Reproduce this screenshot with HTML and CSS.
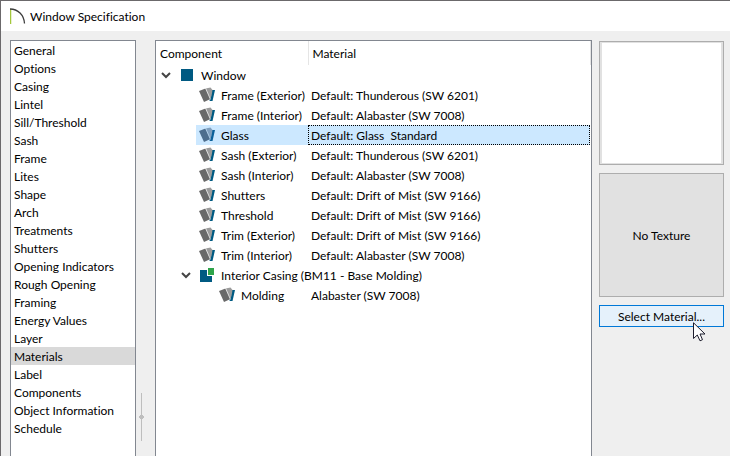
FILE: index.html
```
<!DOCTYPE html>
<html lang="en">
<head>
    <meta charset="UTF-8">
    <meta name="viewport" content="width=device-width, initial-scale=1.0">
    <title>Window Specification</title>
    <link rel="stylesheet" href="styles.css">
</head>
<body>
    <!-- shared icons -->
    <svg class="sprite" aria-hidden="true">
        <symbol id="chevron" viewBox="0 0 10 8">
            <path d="M1 2 L5 6 L9 2" fill="none" stroke="#444" stroke-width="2"/>
        </symbol>
        <symbol id="swatches" viewBox="0 0 16 16">
            <path d="M13 3 L16 3 L13.500 14 L10.500 14 Z" fill="#005a82"/>
            <path d="M6.500 1.500 L11.500 0.500 L13.500 3 L12.500 9 L11 12 Z" fill="#9b9b9b"/>
            <path d="M0 4 L6.500 1.500 L11.500 12 L5 15 Z" fill="#696969"/>
            <path d="M6.500 1 L11.500 12.500" fill="none" stroke="#fff" stroke-width="0.700"/>
        </symbol>
        <symbol id="swatches-on" viewBox="0 0 16 16">
            <path d="M13 3 L16 3 L13.500 14 L10.500 14 Z" fill="#0b609a"/>
            <path d="M6.500 1.500 L11.500 0.500 L13.500 3 L12.500 9 L11 12 Z" fill="#7f9fbe"/>
            <path d="M0 4 L6.500 1.500 L11.500 12 L5 15 Z" fill="#4d6e8e"/>
            <path d="M6.500 1 L11.500 12.500" fill="none" stroke="#cce8ff" stroke-width="0.700"/>
        </symbol>
    </svg>

    <div class="dialog">
        <header class="titlebar">
            <svg class="logo" width="16" height="16" viewBox="0 0 16 16" aria-hidden="true">
                <path d="M0.500 1 V16" stroke="#a4c73c" stroke-width="1.500"/>
                <path d="M0 1 C8 1 14 7 14.500 15.500" fill="none" stroke="#3c3c3c" stroke-width="1.300"/>
            </svg>
            <h1>Window Specification</h1>
        </header>

        <main class="content">
            <nav class="pages">
                <button>General</button>
                <button>Options</button>
                <button>Casing</button>
                <button>Lintel</button>
                <button>Sill/Threshold</button>
                <button>Sash</button>
                <button>Frame</button>
                <button>Lites</button>
                <button>Shape</button>
                <button>Arch</button>
                <button>Treatments</button>
                <button>Shutters</button>
                <button>Opening Indicators</button>
                <button>Rough Opening</button>
                <button>Framing</button>
                <button>Energy Values</button>
                <button>Layer</button>
                <button class="active" aria-current="page">Materials</button>
                <button>Label</button>
                <button>Components</button>
                <button>Object Information</button>
                <button>Schedule</button>
            </nav>

            <div class="splitter">
                <svg width="5" height="48" viewBox="0 0 5 48" aria-hidden="true">
                    <path d="M2 0 H3 V48 H2 Z M1 22 H4 V23 H5 V25 H4 V26 H1 V25 H0 V23 H1 Z" fill="#bebebe"/>
                </svg>
            </div>

            <div class="tree">
                <table>
                    <thead>
                        <tr><th class="col-name">Component</th><th>Material</th></tr>
                    </thead>
                    <tbody>
                        <tr>
                            <td colspan="2"><div class="node">
                                <button class="toggle" aria-label="Collapse Window"><svg width="10" height="8"><use href="#chevron"/></svg></button>
                                <span class="icon"><svg width="12" height="12"><rect width="12" height="12" fill="#005a82"/></svg></span>Window
                            </div></td>
                        </tr>
                        <tr>
                            <td><div class="node leaf"><span class="icon"><svg width="16" height="16"><use href="#swatches"/></svg></span>Frame (Exterior)</div></td>
                            <td><div class="material">Default: Thunderous (SW 6201)</div></td>
                        </tr>
                        <tr>
                            <td><div class="node leaf"><span class="icon"><svg width="16" height="16"><use href="#swatches"/></svg></span>Frame (Interior)</div></td>
                            <td><div class="material">Default: Alabaster (SW 7008)</div></td>
                        </tr>
                        <tr class="selected">
                            <td><div class="node leaf"><span class="icon"><svg width="16" height="16"><use href="#swatches-on"/></svg></span>Glass</div></td>
                            <td><div class="material">Default: Glass&nbsp; Standard</div></td>
                        </tr>
                        <tr>
                            <td><div class="node leaf"><span class="icon"><svg width="16" height="16"><use href="#swatches"/></svg></span>Sash (Exterior)</div></td>
                            <td><div class="material">Default: Thunderous (SW 6201)</div></td>
                        </tr>
                        <tr>
                            <td><div class="node leaf"><span class="icon"><svg width="16" height="16"><use href="#swatches"/></svg></span>Sash (Interior)</div></td>
                            <td><div class="material">Default: Alabaster (SW 7008)</div></td>
                        </tr>
                        <tr>
                            <td><div class="node leaf"><span class="icon"><svg width="16" height="16"><use href="#swatches"/></svg></span>Shutters</div></td>
                            <td><div class="material">Default: Drift of Mist (SW 9166)</div></td>
                        </tr>
                        <tr>
                            <td><div class="node leaf"><span class="icon"><svg width="16" height="16"><use href="#swatches"/></svg></span>Threshold</div></td>
                            <td><div class="material">Default: Drift of Mist (SW 9166)</div></td>
                        </tr>
                        <tr>
                            <td><div class="node leaf"><span class="icon"><svg width="16" height="16"><use href="#swatches"/></svg></span>Trim (Exterior)</div></td>
                            <td><div class="material">Default: Drift of Mist (SW 9166)</div></td>
                        </tr>
                        <tr>
                            <td><div class="node leaf"><span class="icon"><svg width="16" height="16"><use href="#swatches"/></svg></span>Trim (Interior)</div></td>
                            <td><div class="material">Default: Alabaster (SW 7008)</div></td>
                        </tr>
                        <tr>
                            <td colspan="2"><div class="node level-2">
                                <button class="toggle" aria-label="Collapse Interior Casing"><svg width="10" height="8"><use href="#chevron"/></svg></button>
                                <span class="icon"><svg width="14" height="14"><path d="M0 2 H7 V8 H12 V14 H0 Z" fill="#005a82"/><rect x="8" y="0" width="6" height="7" fill="#2fa44a"/></svg></span>Interior Casing (BM11 - Base Molding)
                            </div></td>
                        </tr>
                        <tr>
                            <td><div class="node leaf level-3"><span class="icon"><svg width="16" height="16"><use href="#swatches"/></svg></span>Molding</div></td>
                            <td><div class="material">Alabaster (SW 7008)</div></td>
                        </tr>
                    </tbody>
                </table>
            </div>

            <aside class="preview">
                <div class="swatch"></div>
                <div class="texture">No Texture</div>
                <div class="action">
                    <button class="select-btn">Select Material...</button>
                    <svg class="pointer" width="13" height="20" viewBox="0 0 13 20" aria-hidden="true">
                        <path d="M0.500 0.800 V16.500 L4.300 13 L7 18.800 L9.500 17.700 L7 12 H12 Z" fill="#fff" stroke="#1c1c2c"/>
                    </svg>
                </div>
            </aside>
        </main>
    </div>
</body>
</html>
```
FILE: styles.css
```
* {
    box-sizing: border-box;
}
body {
    margin: 0;
    font-family: Lato, "Open Sans", sans-serif;
    font-size: 12px;
    font-variant-ligatures: none;
    color: #000;
    background: #efefef;
}
button {
    font: inherit;
    font-variant-ligatures: none;
    color: inherit;
    cursor: pointer;
}
svg {
    display: block;
}
.sprite {
    display: none;
}
.dialog {
    display: flex;
    flex-direction: column;
    min-height: 100vh;
    border: 1px solid #6b696b;
    border-width: 1px 0 0 1px;
}

/* title bar */
.titlebar {
    display: flex;
    align-items: center;
    gap: 4px;
    height: 30px;
    padding-left: 9px;
    background: #fff;
}
.titlebar h1 {
    margin: 0;
    font-size: 12px;
    font-weight: 400;
}

.content {
    flex: 1;
    display: flex;
    padding: 9px 6px 0 9px;
}

/* page list */
.pages {
    display: flex;
    flex-direction: column;
    width: 126px;
    background: #fff;
    border: 1px solid #828790;
    border-bottom: none;
}
.pages button {
    height: 18px;
    padding: 1px 3px 0;
    border: none;
    background: none;
    line-height: 18px;
    text-align: left;
    white-space: nowrap;
}
.pages .active {
    background: #d9d9d9;
}
.splitter {
    width: 19px;
    padding: 353px 0 0 3px;
}

/* component tree */
.tree {
    flex: 1;
    background: #fff;
    border: 1px solid #828790;
    border-bottom: none;
}
table {
    width: 100%;
    table-layout: fixed;
    border-collapse: collapse;
}
th, td {
    padding: 0;
    text-align: left;
    font-weight: 400;
    white-space: nowrap;
}
th {
    height: 24px;
    padding: 0 4px;
    border-right: 1px solid #e5e5e5;
}
.col-name {
    width: 152px;
}
td {
    height: 20px;
}
.node {
    display: flex;
    align-items: center;
    height: 20px;
}
.toggle {
    display: flex;
    align-items: center;
    justify-content: center;
    width: 20px;
    height: 20px;
    padding: 0;
    border: none;
    background: none;
}
.icon {
    display: flex;
    flex: none;
    justify-content: center;
    width: 22px;
    margin-right: 3px;
}
.leaf {
    margin-left: 40px;
}
.level-2 {
    margin-left: 20px;
}
.level-3 {
    margin-left: 60px;
}
.material {
    height: 20px;
    margin-right: 1px;
    padding-left: 2px;
    border: 1px solid transparent;
    line-height: 20px;
}
.selected .node, .selected .material {
    background: #cce8ff;
}
.selected .material {
    border: 1px dotted #000;
}

/* preview column */
.preview {
    display: flex;
    flex-direction: column;
    gap: 8px;
    width: 125px;
    margin: 1px 0 0 7px;
}
.swatch, .texture {
    height: 124px;
    border: 1px solid #adadad;
    background: #e1e1e1;
}
.swatch {
    padding: 1px 2px;
}
.swatch::before {
    content: "";
    display: block;
    height: 100%;
    background: #fff;
}
.texture {
    display: flex;
    align-items: center;
    justify-content: center;
}
.action {
    position: relative;
}
.select-btn {
    display: block;
    width: 100%;
    height: 22px;
    padding: 0;
    border: 1px solid #0078d7;
    background: #e5f1fb;
    line-height: 22px;
}
.pointer {
    position: absolute;
    top: 17px;
    right: 18px;
    pointer-events: none;
}
```
